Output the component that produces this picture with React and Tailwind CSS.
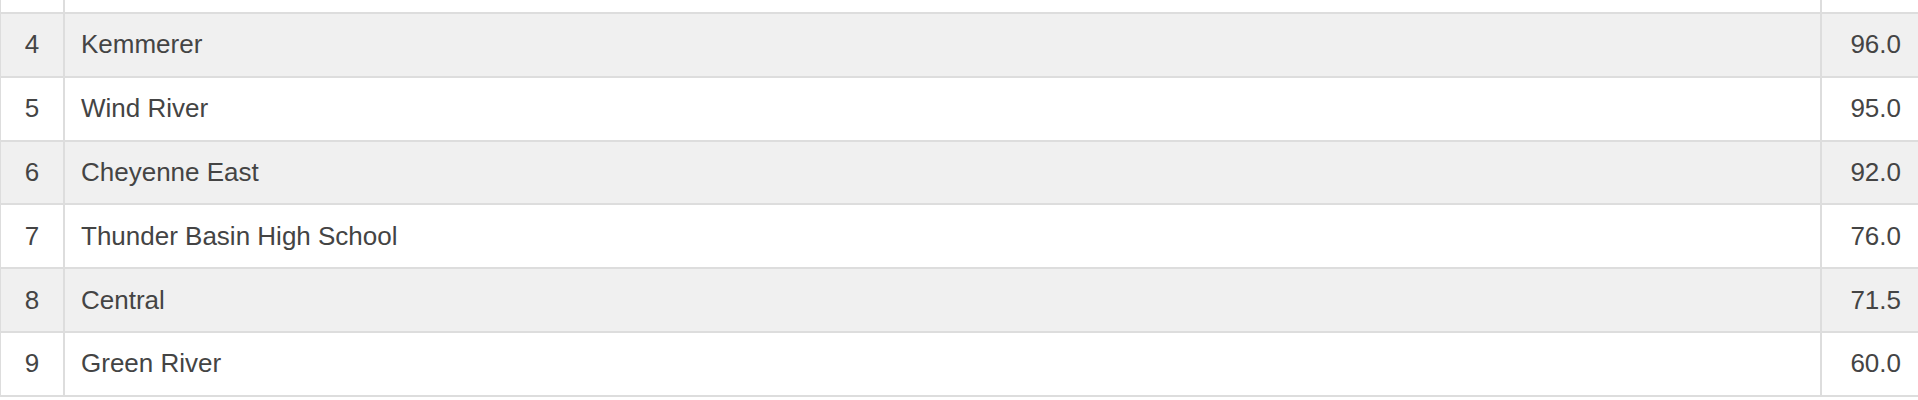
export default function App() {
  const rows = [
    ["4", "Kemmerer", "96.0"],
    ["5", "Wind River", "95.0"],
    ["6", "Cheyenne East", "92.0"],
    ["7", "Thunder Basin High School", "76.0"],
    ["8", "Central", "71.5"],
    ["9", "Green River", "60.0"],
  ];
  return (
    <div className="w-[1918px] h-[400px] overflow-hidden bg-white font-['Liberation_Sans',Arial,sans-serif] text-[26px] text-[#444]">
      <div className="flex h-[14px] border-b-2 border-[#ddd] bg-white">
        <div className="w-[65px] border-l border-r-2 border-[#ddd]" />
        <div className="flex-1 border-r-2 border-[#ddd]" />
        <div className="w-[96px]" />
      </div>
      {rows.map((r, i) => (
        <div
          key={r[0]}
          className={`flex h-[63.8px] border-b-2 border-[#ddd] ${i % 2 === 0 ? "bg-[#f0f0f0]" : "bg-white"}`}
        >
          <div className="w-[65px] border-l border-r-2 border-[#ddd] flex items-center justify-center">
            {r[0]}
          </div>
          <div className="flex-1 border-r-2 border-[#ddd] flex items-center pl-4">
            {r[1]}
          </div>
          <div className="w-[96px] flex items-center justify-end pr-[17px]">
            {r[2]}
          </div>
        </div>
      ))}
    </div>
  );
}
